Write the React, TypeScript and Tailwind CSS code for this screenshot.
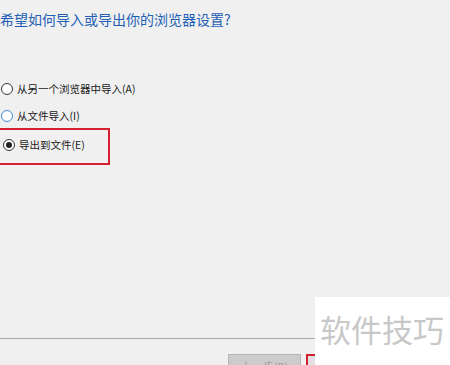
import React from "react";

const FONT = { fontFamily: '"Microsoft YaHei", "Noto Sans CJK SC", "Noto Sans", sans-serif' };

function Radio({ checked, hover }: { checked?: boolean; hover?: boolean }) {
  return (
    <span
      className={`flex h-[12px] w-[12px] shrink-0 items-center justify-center rounded-full border bg-white ${
        hover ? "border-[#3c8ad6]" : "border-[#333333]"
      }`}
    >
      {checked && <span className="h-[6px] w-[6px] rounded-full bg-[#222222]" />}
    </span>
  );
}

function Option({ label, checked, hover }: { label: string; checked?: boolean; hover?: boolean }) {
  return (
    <div className="flex h-[18px] items-center gap-[4px] text-[10.5px] text-[#1a1a1a]">
      <Radio checked={checked} hover={hover} />
      <span>{label}</span>
    </div>
  );
}

export default function App() {
  return (
    <div style={FONT} className="relative h-[365px] w-[450px] overflow-hidden bg-[#f0f0f0]">
      <div className="pt-[9px] text-[14px] leading-[20px] text-[#1f5fb5]">
        希望如何导入或导出你的浏览器设置?
      </div>

      <div className="mt-[51px] pl-[1px]">
        <Option label="从另一个浏览器中导入(A)" />
        <div className="mt-[9px]">
          <Option label="从文件导入(I)" hover />
        </div>
      </div>

      <div className="-ml-[4px] mt-[3px] h-[37px] w-[114px] border-2 border-[#d3212f] pl-[5px] pt-[6px]">
        <Option label="导出到文件(E)" checked />
      </div>

      <div className="mt-[173px] h-px w-[315px] bg-[#a8a8a8]" />

      <div className="mt-[15px] flex gap-[5px] pl-[228px]">
        <div className="flex h-[24px] w-[73px] items-start justify-center border border-[#b5b5b5] bg-[#cccccc] pt-[3px] text-[11px] text-[#9c9c9c]">
          上一步(B)
        </div>
        <div className="h-[24px] w-[73px] border-2 border-[#d3212f] bg-[#e1e1e1]" />
      </div>

      <div className="absolute left-[315px] top-[297px] flex h-[68px] w-[135px] bg-white pl-[5px] pt-[15px]">
        <span className="text-[31px] leading-[34px] text-[#c8c8c8]">软件技巧</span>
      </div>
    </div>
  );
}
